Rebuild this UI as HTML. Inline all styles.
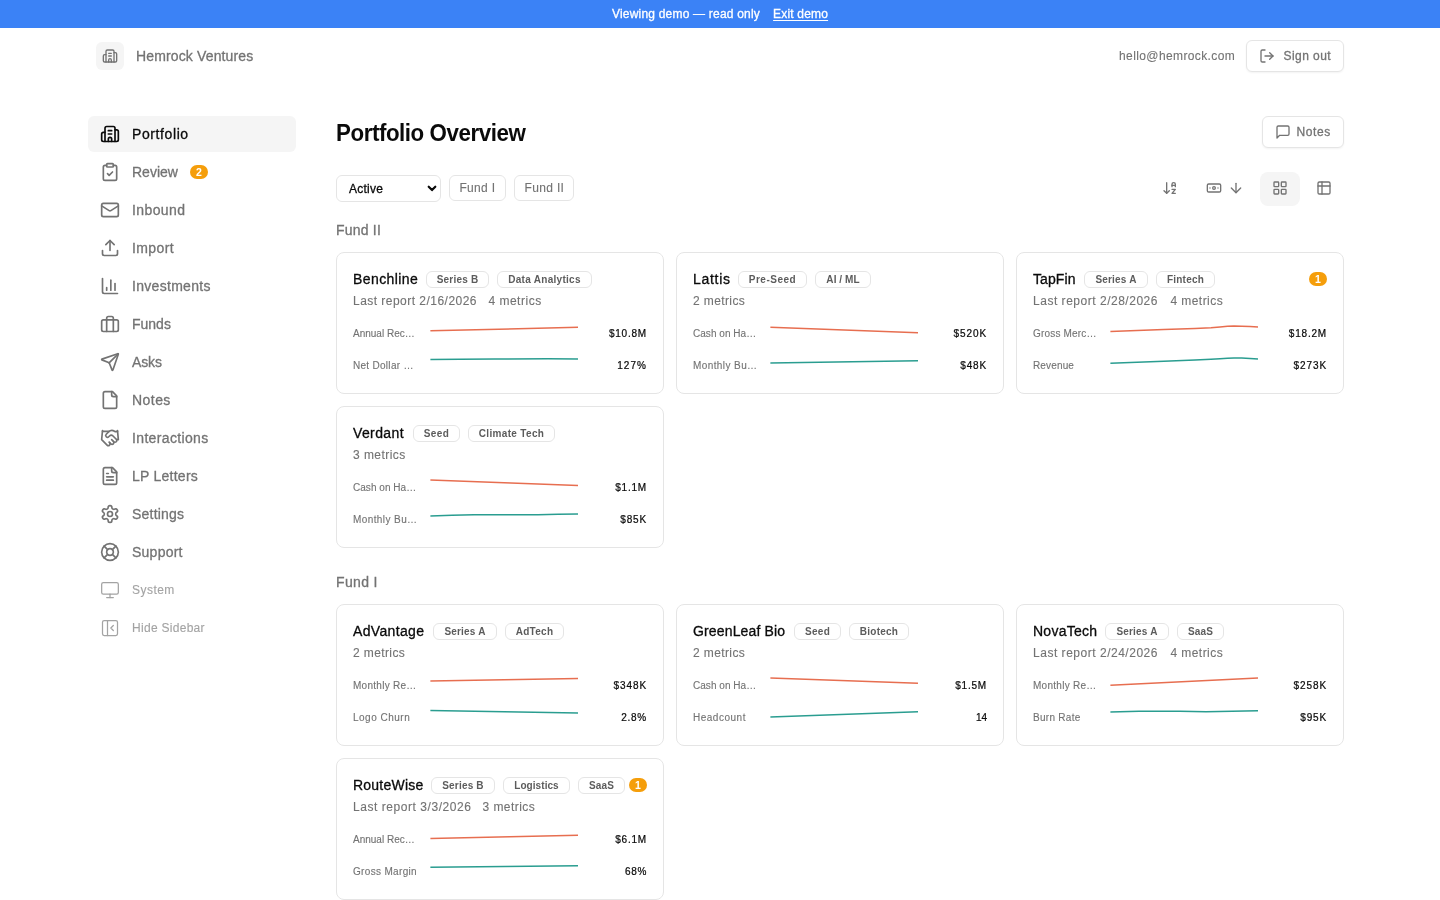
<!DOCTYPE html>
<html lang="en">
<head>
<meta charset="utf-8">
<title>Portfolio Overview – Hemrock Ventures</title>
<style>
*{box-sizing:border-box;margin:0;padding:0}
html,body{width:1440px;height:900px;overflow:hidden;background:#fff}
body{font-family:"Liberation Sans",Arial,sans-serif;color:#0a0a0a;position:relative;-webkit-text-stroke:.12px currentColor}
#app{position:absolute;left:0;top:0;width:1440px;height:900px;will-change:transform}
svg.i{fill:none;stroke:currentColor;stroke-width:2;stroke-linecap:round;stroke-linejoin:round;display:block;flex:none}
.med{-webkit-text-stroke:.3px currentColor}
.banner{position:absolute;left:0;top:0;width:1440px;height:28px;background:#3b82f6;color:#fff;font-size:12px;line-height:28px}
.banner span,.banner a{position:absolute;top:0;white-space:nowrap;color:#fff}
.banner a{text-decoration:underline;text-underline-offset:2px}
.hdr{position:absolute;left:80px;top:28px;width:1280px;height:56px}
.logo{position:absolute;left:16px;top:14px;width:28px;height:28px;border-radius:6px;background:#f5f5f5;color:#737373;display:flex;align-items:center;justify-content:center}
.brand{position:absolute;left:56px;top:14px;line-height:28px;font-size:14px;color:#737373;white-space:nowrap}
.email{position:absolute;top:12px;line-height:32px;font-size:12px;color:#737373;white-space:nowrap}
.btn{position:absolute;border:1px solid #e5e5e5;border-radius:6px;background:#fff;color:#737373;font-size:12px;white-space:nowrap;box-shadow:0 1px 2px rgba(0,0,0,.05)}
.btn svg{position:absolute;left:12px;top:7px}
.btn span{position:absolute;top:0;line-height:30px}
.signout{left:1166px;top:12px;width:98px;height:32px}
.side{position:absolute;left:88px;top:116px;width:208px}
.side a{display:flex;align-items:center;height:36px;margin-bottom:2px;padding-left:12px;border-radius:6px;color:#737373;font-size:14px;text-decoration:none;white-space:nowrap}
.side a svg{margin-right:12px}
.side a.on{background:#f5f5f5;color:#0a0a0a}
.side a.sm{font-size:12px;color:#a3a3a3}
.side a.sm svg{stroke-width:1.5}
.pill{display:block;background:#f59e0b;color:#fff;font-size:10.5px;font-weight:700;line-height:14.8px;height:14px;width:18px;border-radius:7px;text-align:center;-webkit-text-stroke:0}
.side .pill{position:absolute;left:102px}
.main{position:absolute;left:336px;top:116px;width:1008px;height:784px}
h1{-webkit-text-stroke:0;position:absolute;left:0;top:1.1px;font-size:24px;line-height:32px;font-weight:700;white-space:nowrap;transform:scaleX(.93);transform-origin:0 0}
.notes{left:926px;top:0;width:82px;height:32px}
.sel{position:absolute;left:0;top:59px;width:105px;height:27px;border:1px solid #e5e5e5;border-radius:6px;font-size:12px;line-height:26px;padding-left:12px;color:#0a0a0a;white-space:nowrap}
.sel svg{position:absolute;left:89px;top:7px;color:#0a0a0a}
.fbtn{position:absolute;top:59px;height:26px;border:1px solid #e5e5e5;border-radius:6px;font-size:12px;line-height:24px;color:#737373;white-space:nowrap}
.fbtn span{position:absolute;top:0}
.tool{position:absolute;color:#737373}
.gridbtn{position:absolute;left:924px;top:56px;width:40px;height:34px;border-radius:8px;background:#f5f5f5}
h2.fund{position:absolute;left:0;font-size:14px;font-weight:400;line-height:20px;color:#737373;white-space:nowrap}
.card{position:absolute;width:328px;height:142px;border:1px solid #e5e5e5;border-radius:8px;background:#fff}
.card h3{position:absolute;left:16px;top:16px;font-size:14px;font-weight:400;line-height:20px;color:#0a0a0a;white-space:nowrap}
.bdg{-webkit-text-stroke:0;position:absolute;top:18px;border:1px solid #e5e5e5;border-radius:6px;height:17px;line-height:15px;font-size:10px;font-weight:700;color:#5c5c5c;white-space:nowrap;text-align:center}
.card .pill{position:absolute;top:19px;right:16px}
.card .sub{position:absolute;left:16px;top:39px;font-size:12px;line-height:18px;color:#737373;white-space:nowrap}
.card .sub b{position:absolute;top:0;font-weight:400}
.row{position:absolute;left:16px;right:16px;height:24px}
.row.r1{top:69px}.row.r2{top:101px}
.row .lb{position:absolute;left:0;top:0;line-height:24px;font-size:10px;color:#737373;white-space:nowrap}
.row .vl{position:absolute;right:0;top:0;line-height:24px;font-size:10px;color:#0a0a0a;white-space:nowrap;-webkit-text-stroke:.22px currentColor}
.row svg{position:absolute;left:76px;top:-1px;width:150px;height:24px;overflow:visible;fill:none;stroke-width:1.5;stroke-linejoin:round;stroke-linecap:butt}
</style>
</head>
<body>
<div id="app">
<div class="banner"><span id="bn1" class="med" style="left:612.0px;letter-spacing:0.20px">Viewing demo — read only</span><a id="bn2" class="med" style="left:773.1px;letter-spacing:0.18px">Exit demo</a></div>
<header class="hdr">
  <div class="logo"><svg class="i" width="16" height="16" viewBox="0 0 24 24"><path d="M10 12h4"/><path d="M10 8h4"/><path d="M14 21v-3a2 2 0 0 0-4 0v3"/><path d="M6 10H4a2 2 0 0 0-2 2v7a2 2 0 0 0 2 2h16a2 2 0 0 0 2-2V9a2 2 0 0 0-2-2h-2"/><path d="M6 21V5a2 2 0 0 1 2-2h8a2 2 0 0 1 2 2v16"/></svg></div>
  <div class="brand med" id="brand" style="letter-spacing:0.14px">Hemrock Ventures</div>
  <div class="email" id="email" style="left:1039.0px;letter-spacing:0.39px">hello@hemrock.com</div>
  <div class="btn signout med"><svg class="i" width="16" height="16" viewBox="0 0 24 24"><path d="M9 21H5a2 2 0 0 1-2-2V5a2 2 0 0 1 2-2h4"/><polyline points="16 17 21 12 16 7"/><line x1="21" x2="9" y1="12" y2="12"/></svg><span id="so" style="left:36.6px;letter-spacing:0.42px">Sign out</span></div>
</header>
<nav class="side">
  <a class="on med"><svg class="i" width="20" height="20" viewBox="0 0 24 24"><path d="M10 12h4"/><path d="M10 8h4"/><path d="M14 21v-3a2 2 0 0 0-4 0v3"/><path d="M6 10H4a2 2 0 0 0-2 2v7a2 2 0 0 0 2 2h16a2 2 0 0 0 2-2V9a2 2 0 0 0-2-2h-2"/><path d="M6 21V5a2 2 0 0 1 2-2h8a2 2 0 0 1 2 2v16"/></svg><span id="s0" style="letter-spacing:0.60px">Portfolio</span></a>
  <a class="med"><svg class="i" width="20" height="20" viewBox="0 0 24 24"><rect width="8" height="4" x="8" y="2" rx="1" ry="1"/><path d="M16 4h2a2 2 0 0 1 2 2v14a2 2 0 0 1-2 2H6a2 2 0 0 1-2-2V6a2 2 0 0 1 2-2h2"/><path d="m9 14 2 2 4-4"/></svg><span id="s1">Review</span><span class="pill" style="top:49px">2</span></a>
  <a class="med"><svg class="i" width="20" height="20" viewBox="0 0 24 24"><rect width="20" height="16" x="2" y="4" rx="2"/><path d="m22 7-8.97 5.7a1.94 1.94 0 0 1-2.06 0L2 7"/></svg><span id="s2" style="letter-spacing:0.39px">Inbound</span></a>
  <a class="med"><svg class="i" width="20" height="20" viewBox="0 0 24 24"><path d="M21 15v4a2 2 0 0 1-2 2H5a2 2 0 0 1-2-2v-4"/><polyline points="17 8 12 3 7 8"/><line x1="12" x2="12" y1="3" y2="15"/></svg><span id="s3" style="letter-spacing:0.41px">Import</span></a>
  <a class="med"><svg class="i" width="20" height="20" viewBox="0 0 24 24"><path d="M3 3v16a2 2 0 0 0 2 2h16"/><path d="M18 17V9"/><path d="M13 17V5"/><path d="M8 17v-3"/></svg><span id="s4" style="letter-spacing:0.30px">Investments</span></a>
  <a class="med"><svg class="i" width="20" height="20" viewBox="0 0 24 24"><rect width="20" height="14" x="2" y="7" rx="2" ry="2"/><path d="M16 21V5a2 2 0 0 0-2-2h-4a2 2 0 0 0-2 2v16"/></svg><span id="s5">Funds</span></a>
  <a class="med"><svg class="i" width="20" height="20" viewBox="0 0 24 24"><path d="M14.536 21.686a.5.5 0 0 0 .937-.024l6.5-19a.496.496 0 0 0-.635-.635l-19 6.5a.5.5 0 0 0-.024.937l7.93 3.18a2 2 0 0 1 1.112 1.11z"/><path d="m21.854 2.147-10.94 10.939"/></svg><span id="s6" style="letter-spacing:-0.15px">Asks</span></a>
  <a class="med"><svg class="i" width="20" height="20" viewBox="0 0 24 24"><path d="M15 2H6a2 2 0 0 0-2 2v16a2 2 0 0 0 2 2h12a2 2 0 0 0 2-2V7Z"/><path d="M14 2v4a2 2 0 0 0 2 2h4"/></svg><span id="s7" style="letter-spacing:0.45px">Notes</span></a>
  <a class="med"><svg class="i" width="20" height="20" viewBox="0 0 24 24"><path d="m11 17 2 2a1 1 0 1 0 3-3"/><path d="m14 14 2.5 2.5a1 1 0 1 0 3-3l-3.88-3.88a3 3 0 0 0-4.24 0l-.88.88a1 1 0 1 1-3-3l2.81-2.81a5.79 5.79 0 0 1 7.06-.87l.47.28a2 2 0 0 0 1.42.25L21 4"/><path d="m21 3 1 11h-2"/><path d="M3 3 2 14l6.5 6.5a1 1 0 1 0 3-3"/><path d="M3 4h8"/></svg><span id="s8" style="letter-spacing:0.35px">Interactions</span></a>
  <a class="med"><svg class="i" width="20" height="20" viewBox="0 0 24 24"><path d="M15 2H6a2 2 0 0 0-2 2v16a2 2 0 0 0 2 2h12a2 2 0 0 0 2-2V7Z"/><path d="M14 2v4a2 2 0 0 0 2 2h4"/><path d="M10 9H8"/><path d="M16 13H8"/><path d="M16 17H8"/></svg><span id="s9" style="letter-spacing:0.25px">LP Letters</span></a>
  <a class="med"><svg class="i" width="20" height="20" viewBox="0 0 24 24"><path d="M12.22 2h-.44a2 2 0 0 0-2 2v.18a2 2 0 0 1-1 1.73l-.43.25a2 2 0 0 1-2 0l-.15-.08a2 2 0 0 0-2.73.73l-.22.38a2 2 0 0 0 .73 2.73l.15.1a2 2 0 0 1 1 1.72v.51a2 2 0 0 1-1 1.74l-.15.09a2 2 0 0 0-.73 2.73l.22.38a2 2 0 0 0 2.73.73l.15-.08a2 2 0 0 1 2 0l.43.25a2 2 0 0 1 1 1.73V20a2 2 0 0 0 2 2h.44a2 2 0 0 0 2-2v-.18a2 2 0 0 1 1-1.73l.43-.25a2 2 0 0 1 2 0l.15.08a2 2 0 0 0 2.73-.73l.22-.39a2 2 0 0 0-.73-2.73l-.15-.08a2 2 0 0 1-1-1.74v-.5a2 2 0 0 1 1-1.74l.15-.09a2 2 0 0 0 .73-2.73l-.22-.38a2 2 0 0 0-2.73-.73l-.15.08a2 2 0 0 1-2 0l-.43-.25a2 2 0 0 1-1-1.73V4a2 2 0 0 0-2-2z"/><circle cx="12" cy="12" r="3"/></svg><span id="s10" style="letter-spacing:0.21px">Settings</span></a>
  <a class="med"><svg class="i" width="20" height="20" viewBox="0 0 24 24"><circle cx="12" cy="12" r="10"/><path d="m4.93 4.93 4.24 4.24"/><path d="m14.83 9.17 4.24-4.24"/><path d="m14.83 14.83 4.24 4.24"/><path d="m9.17 14.83-4.24 4.24"/><circle cx="12" cy="12" r="4"/></svg><span id="s11" style="letter-spacing:0.24px">Support</span></a>
  <a class="sm"><svg class="i" width="20" height="20" viewBox="0 0 24 24"><rect width="20" height="14" x="2" y="3" rx="2"/><line x1="8" x2="16" y1="21" y2="21"/><line x1="12" x2="12" y1="17" y2="21"/></svg><span id="s12" style="letter-spacing:0.47px">System</span></a>
  <a class="sm"><svg class="i" width="20" height="20" viewBox="0 0 24 24"><rect width="18" height="18" x="3" y="3" rx="2"/><path d="M9 3v18"/><path d="m16 15-3-3 3-3"/></svg><span id="s13" style="letter-spacing:0.29px">Hide Sidebar</span></a>
</nav>
<main class="main">
  <h1 id="h1" style="letter-spacing:-0.47px">Portfolio Overview</h1>
  <div class="btn notes med"><svg class="i" width="16" height="16" viewBox="0 0 24 24"><path d="M21 15a2 2 0 0 1-2 2H7l-4 4V5a2 2 0 0 1 2-2h14a2 2 0 0 1 2 2z"/></svg><span id="nt" style="left:33.5px;letter-spacing:0.58px">Notes</span></div>
  <div class="sel med"><span id="act" style="letter-spacing:0.23px">Active</span><svg class="i" width="12" height="12" viewBox="0 0 12 12" style="stroke-width:2.2"><path d="M2.7 3.7 6 7.1 9.3 3.7"/></svg></div>
  <div class="fbtn" style="left:113px;width:57px"><span id="f1" style="left:9.4px;letter-spacing:0.32px">Fund I</span></div>
  <div class="fbtn" style="left:178px;width:60px"><span id="f2" style="left:9.6px;letter-spacing:0.33px">Fund II</span></div>
  <svg class="i tool" style="left:826px;top:64px" width="16" height="16" viewBox="0 0 24 24"><path d="m3 16 4 4 4-4"/><path d="M7 20V4"/><path d="M20 8h-5"/><path d="M15 10V6.5a2.5 2.5 0 0 1 5 0V10"/><path d="M15 14h5l-5 6h5"/></svg>
  <svg class="i tool" style="left:870px;top:64px" width="16" height="16" viewBox="0 0 24 24"><rect width="20" height="12" x="2" y="6" rx="2"/><circle cx="12" cy="12" r="2"/><path d="M6 12h.01M18 12h.01"/></svg>
  <svg class="i tool" style="left:892px;top:64px" width="16" height="16" viewBox="0 0 24 24"><path d="M12 5v14"/><path d="m19 12-7 7-7-7"/></svg>
  <div class="gridbtn"></div>
  <svg class="i tool" style="left:936px;top:64px" width="16" height="16" viewBox="0 0 24 24"><rect width="7" height="7" x="3" y="3" rx="1"/><rect width="7" height="7" x="14" y="3" rx="1"/><rect width="7" height="7" x="14" y="14" rx="1"/><rect width="7" height="7" x="3" y="14" rx="1"/></svg>
  <svg class="i tool" style="left:980px;top:64px" width="16" height="16" viewBox="0 0 24 24"><rect width="18" height="18" x="3" y="3" rx="2"/><path d="M3 9h18"/><path d="M9 3v18"/></svg>
  <h2 class="fund med" id="fd2" style="top:104px;letter-spacing:0.20px">Fund II</h2>
  <div class="cards">
    <section class="card" style="left:0px;top:136px">
      <h3 class="med" id="c1n" style="letter-spacing:0.42px">Benchline</h3>
      <span class="bdg" style="left:89px;width:63px"><span id="c1b0" style="letter-spacing:0.21px">Series B</span></span>
      <span class="bdg" style="left:160px;width:95px"><span id="c1b1" style="letter-spacing:0.29px">Data Analytics</span></span>
      <p class="sub"><span id="c1s" style="letter-spacing:0.47px">Last report 2/16/2026</span><b id="c1m" style="left:135.4px;letter-spacing:0.51px">4 metrics</b></p>
      <div class="row r1"><span class="lb" id="c1l0">Annual Rec…</span><svg viewBox="0 0 150 24"><polyline stroke="#e76e50" points="1.4,9.75 149,6.3"/></svg><span class="vl" id="c1v0" style="letter-spacing:0.79px">$10.8M</span></div>
      <div class="row r2"><span class="lb" id="c1l1" style="letter-spacing:0.29px">Net Dollar …</span><svg viewBox="0 0 150 24"><polyline stroke="#2a9d90" points="1.4,6.45 31,6.2 66,5.9 119,5.85 149,6.1"/></svg><span class="vl" id="c1v1" style="letter-spacing:1.05px">127%</span></div>
    </section>
    <section class="card" style="left:340px;top:136px">
      <h3 class="med" id="c2n" style="letter-spacing:0.72px">Lattis</h3>
      <span class="bdg" style="left:61px;width:69px"><span id="c2b0" style="letter-spacing:0.52px">Pre-Seed</span></span>
      <span class="bdg" style="left:138px;width:56px"><span id="c2b1" style="letter-spacing:0.07px">AI / ML</span></span>
      <p class="sub"><span id="c2m" style="letter-spacing:0.39px">2 metrics</span></p>
      <div class="row r1"><span class="lb" id="c2l0" style="letter-spacing:0.04px">Cash on Ha…</span><svg viewBox="0 0 150 24"><polyline stroke="#e76e50" points="1.4,6.2 149,11.75"/></svg><span class="vl" id="c2v0" style="letter-spacing:0.90px">$520K</span></div>
      <div class="row r2"><span class="lb" id="c2l1" style="letter-spacing:0.41px">Monthly Bu…</span><svg viewBox="0 0 150 24"><polyline stroke="#2a9d90" points="1.4,10 149,7.75"/></svg><span class="vl" id="c2v1" style="letter-spacing:0.82px">$48K</span></div>
    </section>
    <section class="card" style="left:680px;top:136px">
      <h3 class="med" id="c3n" style="letter-spacing:0.09px">TapFin</h3>
      <span class="bdg" style="left:67px;width:64px"><span id="c3b0" style="letter-spacing:0.19px">Series A</span></span>
      <span class="bdg" style="left:139px;width:59px"><span id="c3b1" style="letter-spacing:0.23px">Fintech</span></span>
      <span class="pill">1</span>
      <p class="sub"><span id="c3s" style="letter-spacing:0.52px">Last report 2/28/2026</span><b id="c3m" style="left:137.4px;letter-spacing:0.45px">4 metrics</b></p>
      <div class="row r1"><span class="lb" id="c3l0" style="letter-spacing:0.18px">Gross Merc…</span><svg viewBox="0 0 150 24"><polyline stroke="#e76e50" points="1.4,10.45 54.75,8.55 86,7.4 102,6.7 111,6 118.5,5.35 125,5 132.7,5.15 141,5.6 149,6.1"/></svg><span class="vl" id="c3v0" style="letter-spacing:0.81px">$18.2M</span></div>
      <div class="row r2"><span class="lb" id="c3l1" style="letter-spacing:0.15px">Revenue</span><svg viewBox="0 0 150 24"><polyline stroke="#2a9d90" points="1.4,10.35 54.75,8.3 86,7.1 102,6.3 111,5.7 118.5,5.15 125,4.9 132.7,5.1 141,5.6 149,6.1"/></svg><span class="vl" id="c3v1" style="letter-spacing:0.90px">$273K</span></div>
    </section>
    <section class="card" style="left:0px;top:290px">
      <h3 class="med" id="c4n" style="letter-spacing:0.38px">Verdant</h3>
      <span class="bdg" style="left:76px;width:47px"><span id="c4b0" style="letter-spacing:0.38px">Seed</span></span>
      <span class="bdg" style="left:131px;width:87px"><span id="c4b1" style="letter-spacing:0.33px">Climate Tech</span></span>
      <p class="sub"><span id="c4m" style="letter-spacing:0.45px">3 metrics</span></p>
      <div class="row r1"><span class="lb" id="c4l0" style="letter-spacing:0.04px">Cash on Ha…</span><svg viewBox="0 0 150 24"><polyline stroke="#e76e50" points="1.4,4.9 149,10.45"/></svg><span class="vl" id="c4v0" style="letter-spacing:0.79px">$1.1M</span></div>
      <div class="row r2"><span class="lb" id="c4l1" style="letter-spacing:0.41px">Monthly Bu…</span><svg viewBox="0 0 150 24"><polyline stroke="#2a9d90" points="1.4,9.05 23,8.2 45,7.65 74,7.75 109,7.75 129,7.35 149,6.9"/></svg><span class="vl" id="c4v1" style="letter-spacing:0.82px">$85K</span></div>
    </section>
  </div>
  <h2 class="fund med" id="fd1" style="top:456px;letter-spacing:0.36px">Fund I</h2>
  <div class="cards">
    <section class="card" style="left:0px;top:488px">
      <h3 class="med" id="c5n" style="letter-spacing:0.34px">AdVantage</h3>
      <span class="bdg" style="left:96px;width:64px"><span id="c5b0" style="letter-spacing:0.19px">Series A</span></span>
      <span class="bdg" style="left:168px;width:59px"><span id="c5b1" style="letter-spacing:0.27px">AdTech</span></span>
      <p class="sub"><span id="c5m" style="letter-spacing:0.39px">2 metrics</span></p>
      <div class="row r1"><span class="lb" id="c5l0" style="letter-spacing:0.27px">Monthly Re…</span><svg viewBox="0 0 150 24"><polyline stroke="#e76e50" points="1.4,8.1 149,5.4"/></svg><span class="vl" id="c5v0" style="letter-spacing:0.90px">$348K</span></div>
      <div class="row r2"><span class="lb" id="c5l1" style="letter-spacing:0.50px">Logo Churn</span><svg viewBox="0 0 150 24"><polyline stroke="#2a9d90" points="1.4,5.4 149,7.95"/></svg><span class="vl" id="c5v1" style="letter-spacing:0.75px">2.8%</span></div>
    </section>
    <section class="card" style="left:340px;top:488px">
      <h3 class="med" id="c6n" style="letter-spacing:0.15px">GreenLeaf Bio</h3>
      <span class="bdg" style="left:117px;width:47px"><span id="c6b0" style="letter-spacing:0.30px">Seed</span></span>
      <span class="bdg" style="left:172px;width:60px"><span id="c6b1" style="letter-spacing:0.23px">Biotech</span></span>
      <p class="sub"><span id="c6m" style="letter-spacing:0.39px">2 metrics</span></p>
      <div class="row r1"><span class="lb" id="c6l0" style="letter-spacing:0.04px">Cash on Ha…</span><svg viewBox="0 0 150 24"><polyline stroke="#e76e50" points="1.4,4.9 149,10.2"/></svg><span class="vl" id="c6v0" style="letter-spacing:0.79px">$1.5M</span></div>
      <div class="row r2"><span class="lb" id="c6l1" style="letter-spacing:0.51px">Headcount</span><svg viewBox="0 0 150 24"><polyline stroke="#2a9d90" points="1.4,12 149,6.7"/></svg><span class="vl" id="c6v1">14</span></div>
    </section>
    <section class="card" style="left:680px;top:488px">
      <h3 class="med" id="c7n" style="letter-spacing:0.26px">NovaTech</h3>
      <span class="bdg" style="left:88px;width:64px"><span id="c7b0" style="letter-spacing:0.19px">Series A</span></span>
      <span class="bdg" style="left:160px;width:47px"><span id="c7b1" style="letter-spacing:0.15px">SaaS</span></span>
      <p class="sub"><span id="c7s" style="letter-spacing:0.52px">Last report 2/24/2026</span><b id="c7m" style="left:137.4px;letter-spacing:0.45px">4 metrics</b></p>
      <div class="row r1"><span class="lb" id="c7l0" style="letter-spacing:0.27px">Monthly Re…</span><svg viewBox="0 0 150 24"><polyline stroke="#e76e50" points="1.4,12.35 149,5"/></svg><span class="vl" id="c7v0" style="letter-spacing:0.90px">$258K</span></div>
      <div class="row r2"><span class="lb" id="c7l1" style="letter-spacing:0.28px">Burn Rate</span><svg viewBox="0 0 150 24"><polyline stroke="#2a9d90" points="1.4,7 30,6.25 71,6.2 97,6.8 123,6.3 149,5.7"/></svg><span class="vl" id="c7v1" style="letter-spacing:0.82px">$95K</span></div>
    </section>
    <section class="card" style="left:0px;top:642px">
      <h3 class="med" id="c8n" style="letter-spacing:0.23px">RouteWise</h3>
      <span class="bdg" style="left:94px;width:64px"><span id="c8b0" style="letter-spacing:0.19px">Series B</span></span>
      <span class="bdg" style="left:166px;width:67px"><span id="c8b1" style="letter-spacing:0.06px">Logistics</span></span>
      <span class="bdg" style="left:241px;width:47px"><span id="c8b2" style="letter-spacing:0.15px">SaaS</span></span>
      <span class="pill">1</span>
      <p class="sub"><span id="c8s" style="letter-spacing:0.55px">Last report 3/3/2026</span><b id="c8m" style="left:129.5px;letter-spacing:0.45px">3 metrics</b></p>
      <div class="row r1"><span class="lb" id="c8l0">Annual Rec…</span><svg viewBox="0 0 150 24"><polyline stroke="#e76e50" points="1.4,11.5 149,8.2"/></svg><span class="vl" id="c8v0" style="letter-spacing:0.79px">$6.1M</span></div>
      <div class="row r2"><span class="lb" id="c8l1" style="letter-spacing:0.33px">Gross Margin</span><svg viewBox="0 0 150 24"><polyline stroke="#2a9d90" points="1.4,8.2 149,6.8"/></svg><span class="vl" id="c8v1" style="letter-spacing:0.68px">68%</span></div>
    </section>
  </div>
</main>
</div>
</body>
</html>
